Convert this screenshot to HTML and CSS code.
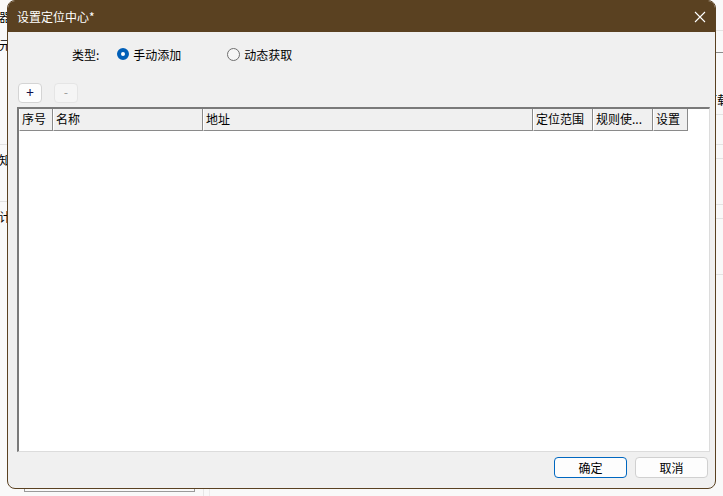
FILE: index.html
```html
<!DOCTYPE html>
<html>
<head>
  <meta charset="UTF-8" />
  <title>设置定位中心</title>
  <link rel="stylesheet" href="styles.css">
</head>
<body>
  <!-- main window behind the dialog -->
  <div class="app">
    <div class="side">
      <div class="side-row r1"><span>服务器</span></div>
      <div class="side-row r2"><span>单元</span></div>
      <div class="side-row r3"><span>认知</span></div>
      <div class="side-row r4"><span>总计</span></div>
      <div class="side-box"><span>▀▀▀▀▀</span></div>
    </div>
    <div class="main">
      <div class="grid-line g1"></div>
      <div class="grid-line g2"></div>
      <div class="grid-cell"><span>下载</span></div>
      <div class="grid-line g3"></div>
      <div class="grid-line g4"></div>
      <div class="grid-line g5"></div>
      <div class="grid-line g6"></div>
      <div class="grid-line g7"></div>
      <div class="grid-line g8"></div>
    </div>
  </div>

  <div class="dialog">
    <div class="titlebar">
      <span class="title">设置定位中心*</span>
      <svg class="close" width="12" height="12" viewBox="0 0 12 12">
        <path d="M1 1 L11 11 M11 1 L1 11" stroke="#ffffff" stroke-width="1.1" fill="none"/>
      </svg>
    </div>

    <div class="content">
      <div class="type-row">
        <span class="type-label">类型:</span>
        <label class="radio checked"><span class="dot"></span>手动添加</label>
        <label class="radio"><span class="dot"></span>动态获取</label>
      </div>

      <div class="toolbar">
        <button class="tool-btn">+</button>
        <button class="tool-btn disabled">-</button>
      </div>

      <div class="table">
        <div class="thead">
          <div class="th c-no">序号</div>
          <div class="th c-name">名称</div>
          <div class="th c-addr">地址</div>
          <div class="th c-range">定位范围</div>
          <div class="th c-rule">规则使...</div>
          <div class="th c-set">设置</div>
        </div>
        <div class="tbody"></div>
      </div>

      <div class="footer">
        <button class="btn primary">确定</button>
        <button class="btn">取消</button>
      </div>
    </div>
  </div>
</body>
</html>
```

FILE: styles.css
```css
html, body {
  margin: 0;
  padding: 0;
}
body {
  width: 723px;
  height: 496px;
  overflow: hidden;
  position: relative;
  background: #f9f9f9;
  font-family: "Noto Sans CJK SC", "Noto Sans", sans-serif;
  font-size: 12px;
  color: #000;
}

/* background window */
.app {
  display: flex;
  height: 496px;
}
.side {
  width: 203px;
  border-right: 1px solid #e6e6e6;
  display: flex;
  flex-direction: column;
  padding-left: 0;
}
.side-row {
  height: 28px;
  display: flex;
  align-items: center;
  justify-content: flex-end;
  width: 7px;
  overflow: hidden;
  white-space: nowrap;
  font-size: 12px;
}
.side-row span {
  margin-right: -4px;
}
.side-row.r1 { margin-top: 2px; }
.side-row.r3 { margin-top: 86px; border-top: 1px solid #e2e2e2; }
.side-row.r4 { margin-top: 28px; border-top: 1px solid #e2e2e2; }
.side-box {
  margin: auto 8px 4px 24px;
  height: 7px;
  border-bottom: 1px solid #9a9a9a;
  border-left: 1px solid #9a9a9a;
  border-right: 1px solid #9a9a9a;
  font-size: 6px;
  line-height: 4px;
  padding-left: 8px;
  overflow: hidden;
}
.main {
  flex: 1;
  position: relative;
  border-left: 1px solid #ececec;
  margin-left: 5px;
}
.grid-line {
  height: 0;
  border-top: 1px solid #e3e3e3;
  margin-left: 0;
}
.g1 { margin-top: 30px; }
.g2 { margin-top: 21px; border-color: #8a8a8a; }
.grid-cell {
  height: 61px;
  display: flex;
  align-items: flex-end;
  justify-content: flex-end;
  padding-bottom: 0;
  margin-right: -6px;
  line-height: 18px;
  box-sizing: border-box;
  padding-bottom: 5px;
}
.g3 { margin-top: 0; }
.g4 { margin-top: 29px; }
.g5 { margin-top: 13px; }
.g6 { margin-top: 45px; }
.g7 { margin-top: 13px; }
.g8 { margin-top: 55px; }

/* dialog */
.dialog {
  position: absolute;
  left: 7px;
  top: 0;
  width: 707px;
  height: 487px;
  border: 1px solid #5a4121;
  border-radius: 8px;
  background: #f0f0f0;
  overflow: hidden;
  display: flex;
  flex-direction: column;
}
.titlebar {
  height: 31px;
  background: #5a4121;
  color: #fff;
  display: flex;
  align-items: center;
  justify-content: space-between;
  padding: 0 8px 0 9px;
  flex-shrink: 0;
}
.title {
  font-size: 12px;
  margin-top: -1px;
}
.close {
  margin-right: 1px;
}
.content {
  flex: 1;
  display: flex;
  flex-direction: column;
  padding: 0 5px 10px 9px;
}
.type-row {
  height: 20px;
  margin-top: 12px;
  display: flex;
  align-items: center;
  padding-left: 55px;
}
.type-label {
  margin-right: 18px;
}
.radio {
  display: flex;
  align-items: center;
  width: 110px;
}
.radio .dot {
  width: 11px;
  height: 11px;
  border: 1px solid #6f6f6f;
  border-radius: 50%;
  background: #f6f6f6;
  margin-right: 4px;
  box-sizing: content-box;
}
.radio.checked .dot {
  width: 4px;
  height: 4px;
  border: 4.5px solid #005fb8;
  background: #fff;
}

.toolbar {
  display: flex;
  gap: 12px;
  margin-top: 19px;
  padding-left: 1px;
}
.tool-btn {
  width: 24px;
  height: 20px;
  border: 1px solid #d4d4d4;
  border-radius: 4px;
  background: #fdfdfd;
  color: #10104a;
  font-family: "Noto Sans", sans-serif;
  font-size: 14px;
  line-height: 16px;
  padding: 0;
}
.tool-btn.disabled {
  background: #f5f5f5;
  border-color: #e5e5e5;
  color: #a0a0a0;
  font-size: 12px;
}

.table {
  margin-top: 4px;
  height: 342px;
  border-top: 2px solid #7a7a7a;
  border-left: 2px solid #7a7a7a;
  border-right: 1px solid #dcdcdc;
  border-bottom: 1px solid #dcdcdc;
  background: #fff;
  display: flex;
  flex-direction: column;
}
.thead {
  display: flex;
  height: 22px;
}
.th {
  box-sizing: border-box;
  height: 22px;
  background: #f0f0f0;
  border-left: 1px solid #fff;
  border-right: 1px solid #8a8a8a;
  border-bottom: 1px solid #8a8a8a;
  padding-left: 2px;
  line-height: 20px;
  white-space: nowrap;
  overflow: hidden;
}
.c-no { width: 34px; }
.c-name { width: 150px; }
.c-addr { width: 330px; }
.c-range { width: 60px; }
.c-rule { width: 60px; }
.c-set { width: 35px; }
.tbody {
  flex: 1;
}

.footer {
  display: flex;
  justify-content: flex-end;
  gap: 8px;
  margin-top: 5px;
  padding-right: 2px;
}
.btn {
  width: 73px;
  height: 21px;
  border: 1px solid #d0d0d0;
  border-radius: 4px;
  background: #fdfdfd;
  font-family: "Noto Sans CJK SC", sans-serif;
  font-size: 12px;
  padding: 0;
  line-height: 18px;
  color: #000;
}
.btn.primary {
  border-color: #0067c0;
}
```
